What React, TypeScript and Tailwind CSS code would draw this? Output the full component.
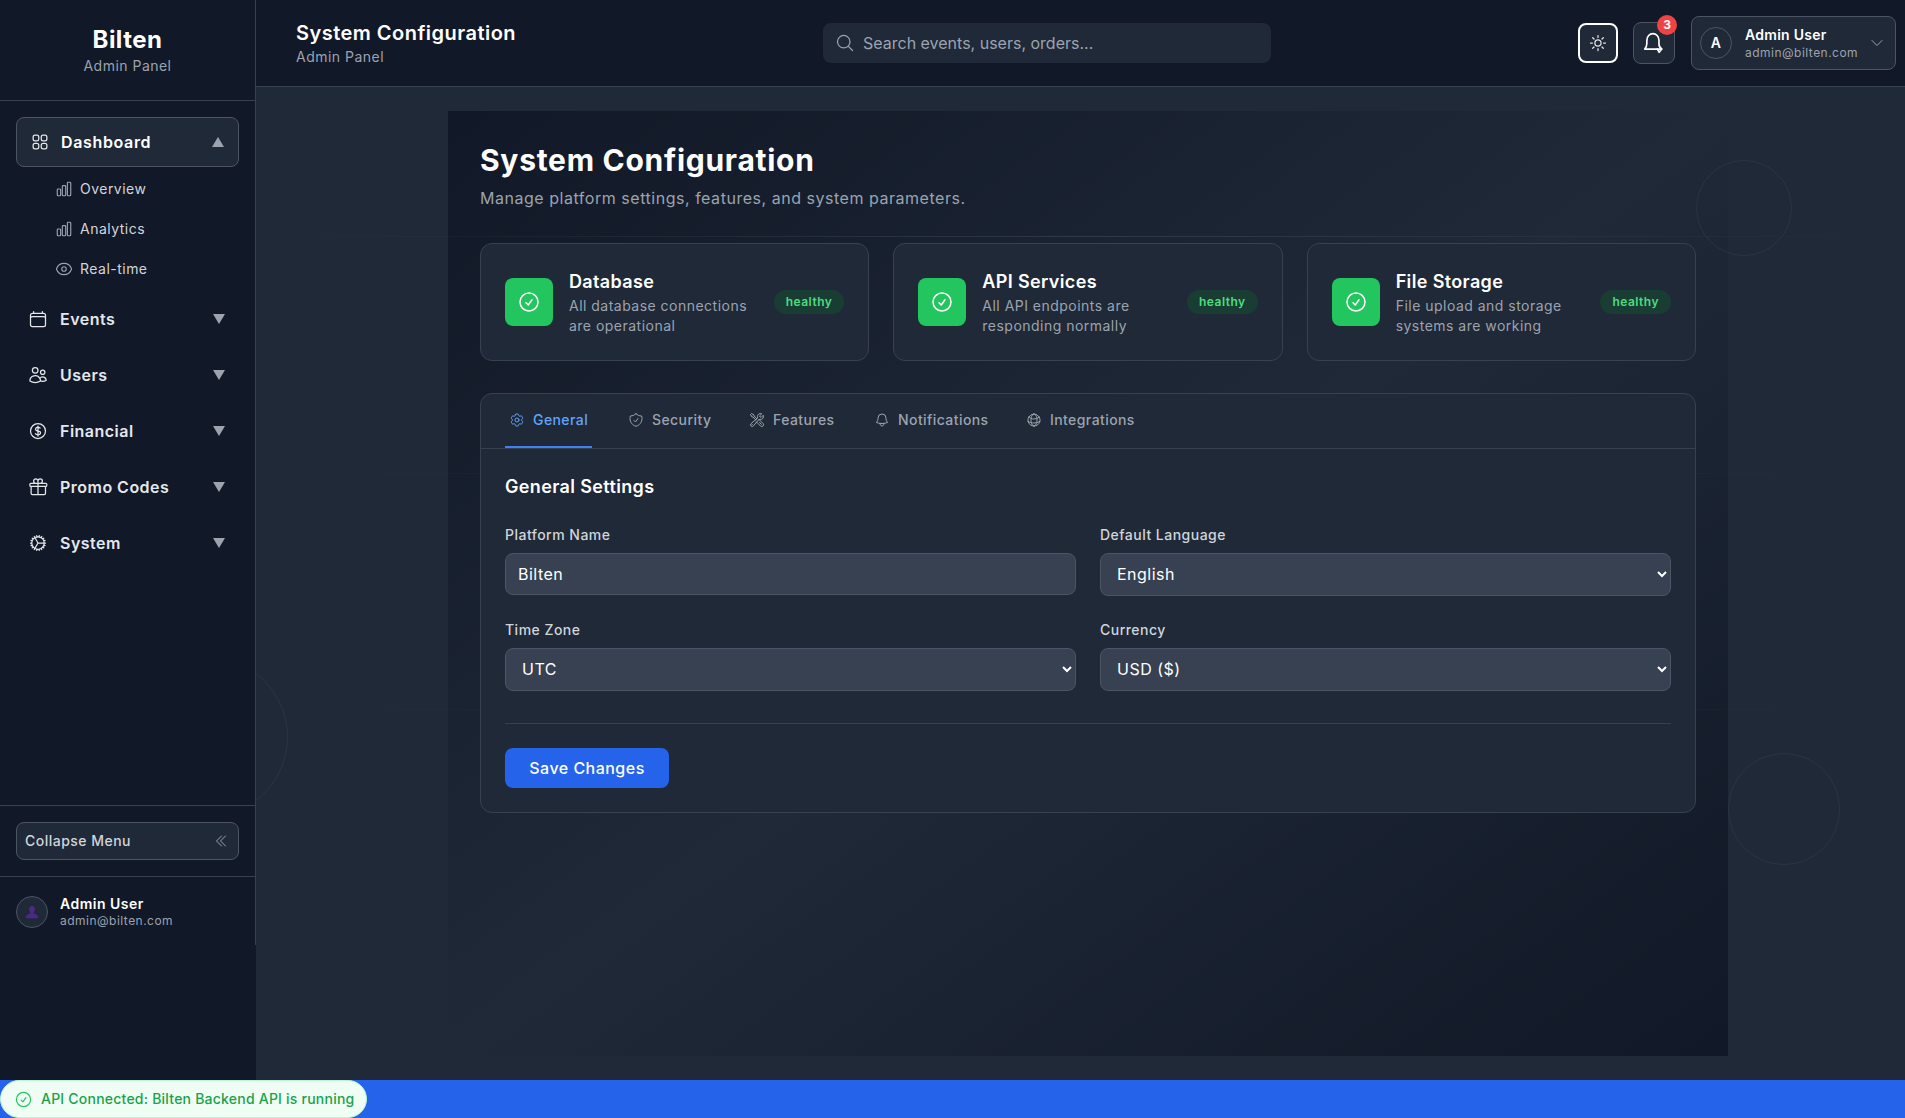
import type { ComponentType } from 'react'
import {
  HiOutlineBell,
  HiOutlineCalendar,
  HiOutlineChartBar,
  HiOutlineCheckCircle,
  HiOutlineChevronDoubleLeft,
  HiOutlineChevronDown,
  HiOutlineCog,
  HiOutlineCog6Tooth,
  HiOutlineCurrencyDollar,
  HiOutlineEye,
  HiOutlineGift,
  HiOutlineGlobeAlt,
  HiOutlineMagnifyingGlass,
  HiOutlineShieldCheck,
  HiOutlineSquares2X2,
  HiOutlineSun,
  HiOutlineUsers,
  HiOutlineWrenchScrewdriver,
} from 'react-icons/hi2'

type Icon = ComponentType<{ className?: string }>

const navItems: { label: string; icon: Icon }[] = [
  { label: 'Events', icon: HiOutlineCalendar },
  { label: 'Users', icon: HiOutlineUsers },
  { label: 'Financial', icon: HiOutlineCurrencyDollar },
  { label: 'Promo Codes', icon: HiOutlineGift },
  { label: 'System', icon: HiOutlineCog },
]

const subItems: { label: string; icon: Icon }[] = [
  { label: 'Overview', icon: HiOutlineChartBar },
  { label: 'Analytics', icon: HiOutlineChartBar },
  { label: 'Real-time', icon: HiOutlineEye },
]

const services = [
  { name: 'Database', lines: ['All database connections', 'are operational'] },
  { name: 'API Services', lines: ['All API endpoints are', 'responding normally'] },
  { name: 'File Storage', lines: ['File upload and storage', 'systems are working'] },
]

const tabs: { label: string; icon: Icon; width: string }[] = [
  { label: 'General', icon: HiOutlineCog6Tooth, width: 'w-[87px]' },
  { label: 'Security', icon: HiOutlineShieldCheck, width: 'w-[89px]' },
  { label: 'Features', icon: HiOutlineWrenchScrewdriver, width: 'w-[93px]' },
  { label: 'Notifications', icon: HiOutlineBell, width: 'w-[120px]' },
  { label: 'Integrations', icon: HiOutlineGlobeAlt, width: 'w-[117px]' },
]

function Triangle({ up }: { up?: boolean }) {
  return (
    <svg viewBox="0 0 12 12" className="w-3 h-3 fill-[#9ca3af]">
      <polygon points={up ? '6,1 12,11 0,11' : '0,1 12,1 6,11'} />
    </svg>
  )
}

function Sidebar() {
  return (
    <div className="w-[256px] shrink-0 bg-[#111827]">
      <aside className="h-[945px] border-r border-[#374151] flex flex-col">
        <div className="h-[101px] border-b border-[#374151] pt-6 text-center">
          <div className="text-2xl leading-8 font-bold text-white">Bilten</div>
          <div className="text-sm leading-5 text-[#9ca3af]">Admin Panel</div>
        </div>

        <nav className="flex-1 px-4 pt-4">
          <div className="h-[50px] flex items-center justify-between pl-[13px] pr-[14px] bg-[#1f2937] border border-[#4b5563] rounded-lg">
            <div className="flex items-center gap-[11px]">
              <HiOutlineSquares2X2 className="w-5 h-5 text-[#e5e7eb]" />
              <span className="text-base leading-5 font-semibold tracking-[0.04em] text-white -mt-px">Dashboard</span>
            </div>
            <Triangle up />
          </div>
          <div className="mt-[2px] pl-[39px]">
            {subItems.map(({ label, icon: SubIcon }) => (
              <div key={label} className="h-10 flex items-center gap-[7px] text-sm text-[#d1d5db]">
                <SubIcon className="w-[18px] h-[18px] text-[#9ca3af]" />
                {label}
              </div>
            ))}
          </div>
          <div className="mt-[2px]">
            {navItems.map(({ label, icon: ItemIcon }) => (
              <div key={label} className="h-14 flex items-center justify-between pl-3 pr-[14px]">
                <div className="flex items-center gap-3">
                  <ItemIcon className="w-5 h-5 text-[#e5e7eb]" />
                  <span className="text-base font-semibold tracking-[0.03em] text-[#e5e7eb]">{label}</span>
                </div>
                <Triangle />
              </div>
            ))}
          </div>
        </nav>

        <div className="h-[71px] border-t border-[#374151] px-4 pt-4">
          <div className="h-[38px] flex items-center justify-between pl-2 pr-[9px] bg-[#1f2937] border border-[#4b5563] rounded-lg">
            <span className="text-sm font-medium text-[#d1d5db]">Collapse Menu</span>
            <HiOutlineChevronDoubleLeft className="w-4 h-4 text-[#9ca3af]" />
          </div>
        </div>

        <div className="h-[69px] border-t border-[#374151] px-4 pt-[18px]">
          <div className="flex items-center gap-3">
            <div className="w-8 h-8 rounded-full bg-[#1f2937] border border-[#4b5563] flex items-center justify-center">
              <svg viewBox="0 0 16 16" className="w-[14px] h-[14px] fill-[#4c2889]">
                <path d="M8 1c2 0 3.2 1.5 3.2 3.5S10 8.4 9.6 9c0 1 3 1.300 4.400 2.500.6.500.8 2 .8 3.500H1.200c0-1.500.2-3 .8-3.500C3.400 10.300 6.400 10 6.400 9 6 8.400 4.800 6.500 4.800 4.500S6 1 8 1z" />
              </svg>
            </div>
            <div>
              <div className="text-sm leading-[18px] font-semibold text-white">Admin User</div>
              <div className="text-xs leading-[16px] tracking-[0.04em] text-[#9ca3af]">admin@bilten.com</div>
            </div>
          </div>
        </div>
      </aside>
    </div>
  )
}

function Header() {
  return (
    <header className="h-[87px] shrink-0 bg-[#111827] border-b border-[#374151] flex items-center pl-10 pr-[9px]">
      <div className="w-[527px] -mt-[1px]">
        <div className="text-xl leading-7 font-semibold text-white">System Configuration</div>
        <div className="text-sm leading-5 text-[#9ca3af]">Admin Panel</div>
      </div>
      <div className="w-[448px] h-10 bg-[#1f2937] rounded-lg flex items-center gap-2 pl-3">
        <HiOutlineMagnifyingGlass className="w-5 h-5 text-[#9ca3af]" />
        <span className="text-base tracking-normal text-[#9ca3af] -mt-px">Search events, users, orders...</span>
      </div>
      <div className="ml-auto flex items-center">
        <button className="w-10 h-10 rounded-lg bg-[#1f2937] border-2 border-white flex items-center justify-center">
          <HiOutlineSun className="w-5 h-5 text-[#e5e7eb]" />
        </button>
        <button className="relative ml-[15px] w-[42px] h-[42px] rounded-lg bg-[#1f2937] border border-[#4b5563] flex items-center justify-center">
          <svg viewBox="0 0 20 20" fill="none" stroke="#ffffff" strokeWidth="1.5" strokeLinejoin="round" strokeLinecap="round" className="w-[22px] h-[22px]">
            <path d="M1.500 15.500c1.500-1.200 2-2.500 2-5V7.500C3.500 4 6 1.500 9 1.500s5.500 2.500 5.500 6v3c0 2.500.8 4 2.500 5z" />
            <path d="M13 15.500l1.700 3 2.300-3" />
          </svg>
          <span className="absolute -top-2 -right-[3px] w-5 h-5 rounded-full bg-[#ef4444] text-white text-xs font-bold tracking-normal flex items-center justify-center">3</span>
        </button>
        <div className="ml-4 w-[205px] h-[54px] rounded-lg bg-[#1f2937] border border-[#4b5563] flex items-center pl-2 pr-[10px]">
          <div className="w-8 h-8 rounded-full bg-[#1f2937] border border-[#4b5563] flex items-center justify-center text-sm font-semibold text-white">A</div>
          <div className="ml-[13px] flex-1 pt-px">
            <div className="text-sm leading-[18px] font-semibold tracking-[0.02em] text-white">Admin User</div>
            <div className="text-xs leading-[17px] tracking-[0.04em] text-[#9ca3af]">admin@bilten.com</div>
          </div>
          <HiOutlineChevronDown className="w-4 h-4 text-[#9ca3af]" />
        </div>
      </div>
    </header>
  )
}

function ServiceCard({ name, lines }: { name: string; lines: string[] }) {
  return (
    <div className="bg-[#1f2937] border border-[#374151] rounded-xl p-6 flex items-center gap-4">
      <div className="w-12 h-12 shrink-0 rounded-lg bg-[#22c55e] flex items-center justify-center">
        <HiOutlineCheckCircle className="w-6 h-6 text-white" />
      </div>
      <div className="flex-1">
        <div className="text-lg leading-7 font-semibold tracking-[0.02em] text-white">{name}</div>
        {lines.map((line) => (
          <div key={line} className="text-sm leading-5 text-[#9ca3af]">{line}</div>
        ))}
      </div>
      <span className="shrink-0 h-6 px-3 rounded-full bg-[#1a3d33] text-xs font-semibold tracking-[0.04em] text-[#4ade80] flex items-center">healthy</span>
    </div>
  )
}

const fieldClass = 'w-full h-[43px] pl-3 pr-0 pb-px bg-[#374151] border border-[#4b5563] rounded-lg text-base text-white [color-scheme:dark]'

function Field({ label, options }: { label: string; options: string }) {
  return (
    <div>
      <label className="block mb-2 text-sm leading-5 font-medium text-[#d1d5db]">{label}</label>
      <select className={fieldClass} defaultValue={options}>
        <option>{options}</option>
      </select>
    </div>
  )
}

function SettingsCard() {
  return (
    <div className="mt-8 bg-[#1f2937] border border-[#374151] rounded-xl">
      <div className="flex gap-8 px-6 border-b border-[#374151]">
        {tabs.map(({ label, icon: TabIcon, width }, i) => (
          <div
            key={label}
            className={`${width} h-[54px] flex items-center gap-2 px-1 text-sm font-medium tracking-[0.03em] border-b-2 whitespace-nowrap ${i === 0 ? 'text-[#60a5fa] border-[#3b82f6]' : 'text-[#9ca3af] border-transparent'}`}
          >
            <TabIcon className="w-4 h-4 shrink-0" />
            {label}
          </div>
        ))}
      </div>
      <div className="p-6">
        <h3 className="mb-6 text-lg leading-7 font-semibold tracking-[0.02em] text-white">General Settings</h3>
        <div className="grid grid-cols-2 gap-x-6 gap-y-6">
          <div>
            <label className="block mb-2 text-sm leading-5 font-medium text-[#d1d5db]">Platform Name</label>
            <input
              defaultValue="Bilten"
              className="w-full h-[42px] px-3 bg-[#374151] border border-[#4b5563] rounded-lg text-base text-white"
            />
          </div>
          <Field label="Default Language" options="English" />
          <Field label="Time Zone" options="UTC" />
          <Field label="Currency" options="USD ($)" />
        </div>
        <div className="mt-8 pt-6 border-t border-[#374151]">
          <button className="h-10 w-[164px] pb-px rounded-lg bg-[#2563eb] text-base font-medium text-white">Save Changes</button>
        </div>
      </div>
    </div>
  )
}

export default function App() {
  return (
    <div className="h-screen flex flex-col overflow-hidden bg-[#1f2937] [font-family:Inter,'Liberation_Sans',sans-serif] tracking-[0.03em]">
      <div className="flex-1 min-h-0 flex">
        <Sidebar />
        <div className="flex-1 min-w-0 flex flex-col">
          <Header />
          <main className="relative flex-1 min-h-0 overflow-hidden pl-[192px] py-6">
            <div className="absolute inset-0 z-[5] pointer-events-none">
              <div className="absolute top-[149px] inset-x-0 h-px bg-gradient-to-r from-transparent via-white/10 to-transparent" />
              <div className="absolute top-[386px] inset-x-0 h-px bg-gradient-to-r from-transparent via-white/5 to-transparent" />
              <div className="absolute top-[622px] inset-x-0 h-px bg-gradient-to-r from-transparent via-white/5 to-transparent" />
              <div className="absolute left-[1440px] top-[73px] w-24 h-24 rounded-full border border-white/5" />
              <div className="absolute left-[1472px] top-[666px] w-28 h-28 rounded-full border border-white/5" />
              <div className="absolute -left-[128px] top-[570px] w-40 h-40 rounded-full border border-white/5" />
            </div>
            <div className="w-[1280px] h-full p-8 bg-gradient-to-br from-[#111827] via-[#1f2937] to-[#111827]">
              <div className="relative z-10">
                <h1 className="text-3xl leading-9 font-bold tracking-[0.024em] text-white -mt-px">System Configuration</h1>
                <p className="mt-2 mb-[33px] text-base leading-6 tracking-[0.033em] text-[#9ca3af]">Manage platform settings, features, and system parameters.</p>
                <div className="w-[1216px]">
                  <div className="grid grid-cols-3 gap-6">
                    {services.map((s) => (
                      <ServiceCard key={s.name} name={s.name} lines={s.lines} />
                    ))}
                  </div>
                  <SettingsCard />
                </div>
              </div>
            </div>
          </main>
        </div>
      </div>
      <div className="h-[38px] shrink-0 bg-[#2563eb] flex">
        <div className="w-[367px] h-full bg-[#f0fdf4] border border-[#bbf7d0] rounded-[19px] flex items-center gap-[8px] pl-[13px]">
          <HiOutlineCheckCircle className="w-[19px] h-[19px] text-[#22c55e]" />
          <span className="text-sm font-medium tracking-[0.016em] text-[#16a34a]">API Connected: Bilten Backend API is running</span>
        </div>
      </div>
    </div>
  )
}
